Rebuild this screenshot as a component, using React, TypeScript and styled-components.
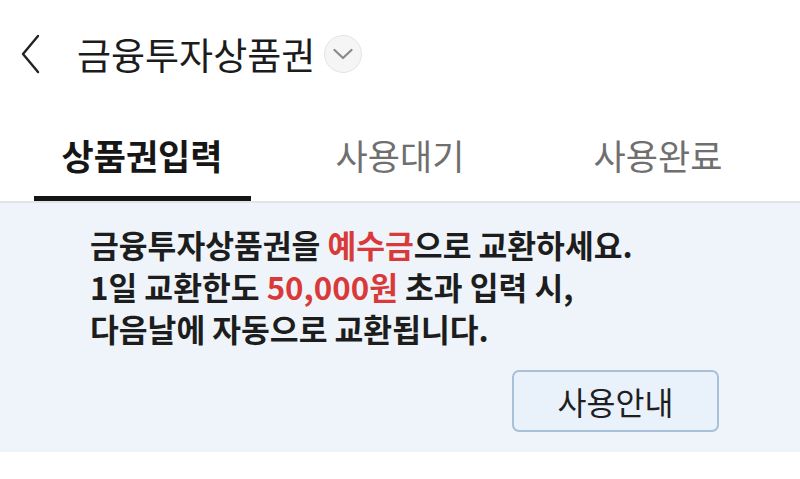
import React, { FC } from 'react'
import styled, { createGlobalStyle, css } from 'styled-components'

const GlobalStyle = createGlobalStyle`
  html, body {
    margin: 0;
    padding: 0;
    background: #ffffff;
  }
  body {
    font-family: 'Noto Sans CJK KR', 'Noto Sans', sans-serif;
    color: #1b1b1b;
  }
`

const tabs = ['상품권입력', '사용대기', '사용완료']

const App: FC = () => (
  <>
    <GlobalStyle />
    <Page>
      <Header>
        <BackButton aria-label="back">
          <svg width="20" height="40" viewBox="0 0 20 40">
            <polyline
              points="17,2 2,20 17,38"
              fill="none"
              stroke="#222"
              strokeWidth="2.4"
              strokeLinecap="round"
              strokeLinejoin="round"
            />
          </svg>
        </BackButton>
        <Title>금융투자상품권</Title>
        <DropButton aria-label="more">
          <svg width="20" height="12" viewBox="0 0 20 12">
            <polyline
              points="1.5,2 10,10 18.5,2"
              fill="none"
              stroke="#8a8a8a"
              strokeWidth="2.2"
              strokeLinecap="round"
              strokeLinejoin="round"
            />
          </svg>
        </DropButton>
      </Header>

      <TabBar>
        {tabs.map((label, i) => (
          <TabCell key={label}>
            <Tab active={i === 0}>{label}</Tab>
          </TabCell>
        ))}
      </TabBar>

      <Notice>
        <NoticeText>
          금융투자상품권을 <Red>예수금</Red>으로 교환하세요.
          <br />
          1일 교환한도 <Red>50,000원</Red> 초과 입력 시,
          <br />
          다음날에 자동으로 교환됩니다.
        </NoticeText>
        <NoticeActions>
          <GuideButton>사용안내</GuideButton>
        </NoticeActions>
      </Notice>
    </Page>
  </>
)

export default App

const Page = styled.div`
  width: 800px;
  min-height: 479px;
  background: #fff;
`

const Header = styled.header`
  display: flex;
  align-items: center;
  height: 112px;
  padding-left: 21px;
  padding-bottom: 5px;
  box-sizing: border-box;
`

const BackButton = styled.div`
  display: flex;
  align-items: center;
  width: 20px;
  height: 40px;
`

const Title = styled.h1`
  margin: 0 0 0 36px;
  font-size: 37px;
  font-weight: 400;
  line-height: 44px;
  color: #1c1c1c;
  letter-spacing: 0;
`

const DropButton = styled.div`
  display: flex;
  align-items: center;
  justify-content: center;
  width: 38px;
  height: 38px;
  margin-left: 9px;
  border-radius: 50%;
  border: 1.5px solid #e4e4e4;
  background: #f5f5f5;
  box-sizing: border-box;
`

const TabBar = styled.nav`
  display: grid;
  grid-template-columns: repeat(3, 1fr);
  padding: 0 13px;
  border-bottom: 2px solid #e2e4e6;
`

const TabCell = styled.div`
  display: flex;
  justify-content: center;
`

const Tab = styled.div<{ active: boolean }>`
  ${({ active }) => css`
    display: flex;
    align-items: center;
    justify-content: center;
    width: 217px;
    height: 89px;
    padding-top: 1px;
    box-sizing: border-box;
    font-size: 35px;
    line-height: 44px;
    font-weight: ${active ? 700 : 400};
    color: ${active ? '#161616' : '#6f6f6f'};
    border-bottom: 5px solid ${active ? '#151515' : 'transparent'};
  `}
`

const Notice = styled.section`
  background: #eef4f9;
  padding: 21px 81px 20px 90px;
  display: flex;
  flex-direction: column;
`

const NoticeText = styled.p`
  margin: 0;
  font-size: 31.3px;
  font-weight: 700;
  line-height: 42px;
  color: #1d1d1d;
  letter-spacing: 0;
  white-space: nowrap;
`

const Red = styled.span`
  color: #d93a39;
`

const NoticeActions = styled.div`
  display: flex;
  justify-content: flex-end;
  margin-top: 20px;
`

const GuideButton = styled.div`
  display: flex;
  align-items: center;
  justify-content: center;
  width: 207px;
  height: 62px;
  box-sizing: border-box;
  border: 2px solid #a8c0da;
  border-radius: 7px;
  background: #e9f1fb;
  font-size: 31.5px;
  font-weight: 400;
  color: #1f1f1f;
`
